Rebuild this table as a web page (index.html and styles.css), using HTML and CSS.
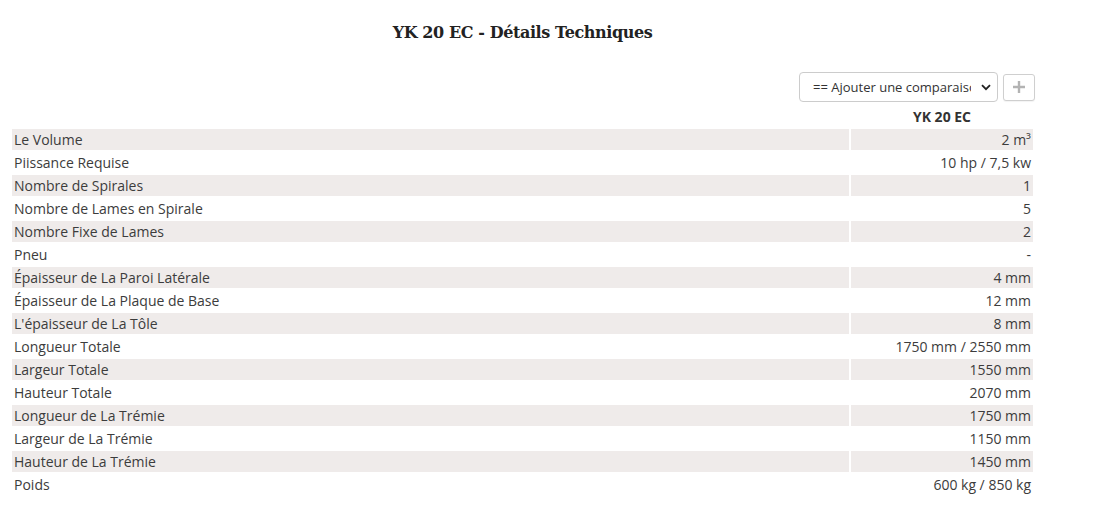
FILE: index.html
```html
<!DOCTYPE html>
<html lang="fr">
<head>
<meta charset="utf-8">
<title>YK 20 EC - Détails Techniques</title>
<link rel="stylesheet" href="styles.css">
</head>
<body>
<div class="page">
  <h1 class="title">YK 20 EC - Détails Techniques</h1>
  <div class="controls">
    <span class="select-wrap">
      <select class="compare-select">
        <option>== Ajouter une comparaison ==</option>
      </select>
      <svg class="chevron" width="10" height="7" viewBox="0 0 10 7"><path d="M1 1.2 L5 5.2 L9 1.2" fill="none" stroke="#222" stroke-width="1.8"/></svg>
    </span>
    <button class="add-btn" type="button">
      <svg width="14" height="14" viewBox="0 0 14 14"><path d="M7 1 V13 M1 7 H13" stroke="#b3b3b3" stroke-width="2.4"/></svg>
    </button>
  </div>
  <table class="specs">
    <thead>
      <tr><th class="label"></th><th class="model">YK 20 EC</th></tr>
    </thead>
    <tbody>
      <tr class="odd"><td class="label">Le Volume</td><td class="value">2 m³</td></tr>
      <tr><td class="label">Piissance Requise</td><td class="value">10 hp / 7,5 kw</td></tr>
      <tr class="odd"><td class="label">Nombre de Spirales</td><td class="value">1</td></tr>
      <tr><td class="label">Nombre de Lames en Spirale</td><td class="value">5</td></tr>
      <tr class="odd"><td class="label">Nombre Fixe de Lames</td><td class="value">2</td></tr>
      <tr><td class="label">Pneu</td><td class="value">-</td></tr>
      <tr class="odd"><td class="label">Épaisseur de La Paroi Latérale</td><td class="value">4 mm</td></tr>
      <tr><td class="label">Épaisseur de La Plaque de Base</td><td class="value">12 mm</td></tr>
      <tr class="odd"><td class="label">L'épaisseur de La Tôle</td><td class="value">8 mm</td></tr>
      <tr><td class="label">Longueur Totale</td><td class="value">1750 mm / 2550 mm</td></tr>
      <tr class="odd"><td class="label">Largeur Totale</td><td class="value">1550 mm</td></tr>
      <tr><td class="label">Hauteur Totale</td><td class="value">2070 mm</td></tr>
      <tr class="odd"><td class="label">Longueur de La Trémie</td><td class="value">1750 mm</td></tr>
      <tr><td class="label">Largeur de La Trémie</td><td class="value">1150 mm</td></tr>
      <tr class="odd"><td class="label">Hauteur de La Trémie</td><td class="value">1450 mm</td></tr>
      <tr><td class="label">Poids</td><td class="value">600 kg / 850 kg</td></tr>
    </tbody>
  </table>
</div>
</body>
</html>
```
FILE: styles.css
```css
html, body {
  margin: 0;
  padding: 0;
  background: #ffffff;
}
body {
  font-family: "Open Sans", "Noto Sans", sans-serif;
  font-size: 14px;
  color: #3c3c3c;
}
.page {
  width: 1025px;
  padding-left: 10px;
  padding-top: 20px;
}
.title {
  margin: 0;
  text-align: center;
  font-family: "DejaVu Serif", "Liberation Serif", serif;
  font-weight: bold;
  font-size: 16px;
  line-height: 26px;
  color: #222222;
  letter-spacing: -0.4px;
}
.controls {
  display: flex;
  justify-content: flex-end;
  align-items: center;
  gap: 5px;
  margin-top: 26px;
  padding-right: 0;
}
.select-wrap {
  position: relative;
  display: inline-block;
}
.compare-select {
  appearance: none;
  -webkit-appearance: none;
  width: 199px;
  height: 30px;
  padding: 0 26px 0 13px;
  border: 1px solid #cccccc;
  border-radius: 4px;
  background: #ffffff;
  font-family: "Open Sans", "Noto Sans", sans-serif;
  font-size: 13px;
  color: #333333;
  display: block;
}
.chevron {
  position: absolute;
  right: 7px;
  top: 12px;
  pointer-events: none;
}
.add-btn {
  width: 32px;
  height: 27px;
  padding: 0;
  border: 1px solid #cfcfcf;
  border-radius: 3px;
  background: #ffffff;
  display: flex;
  align-items: center;
  justify-content: center;
  box-shadow: 0 1px 1px rgba(0,0,0,0.05);
}
.specs {
  width: 1025px;
  border-collapse: separate;
  border-spacing: 2px;
  margin-top: 2px;
}
.specs th, .specs td {
  padding: 1px 2px;
  line-height: 19px;
  height: 19px;
  font-size: 14px;
}
.specs th.model {
  font-weight: bold;
  text-align: center;
  color: #333333;
  width: 178px;
}
.specs td.label {
  text-align: left;
}
.specs td.value {
  text-align: right;
}
.specs tr.odd td {
  background: #efebea;
}
```
